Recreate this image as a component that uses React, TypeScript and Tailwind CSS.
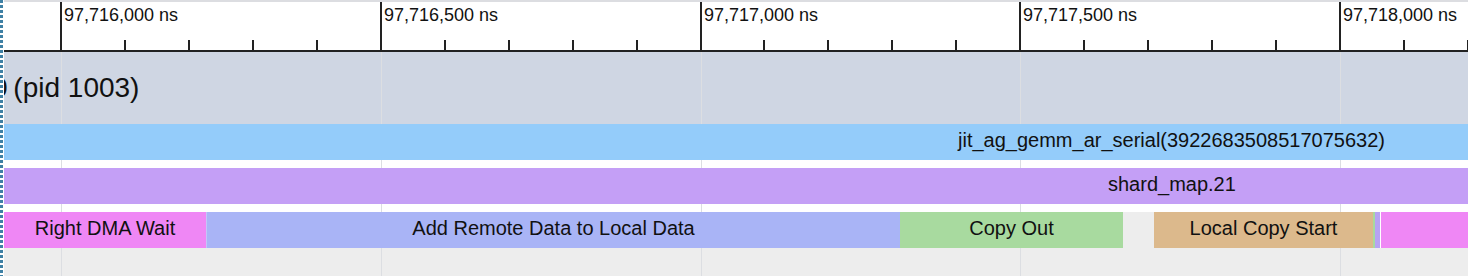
import React from "react";

const MAJOR0 = 56; // main-relative left edge of first major tick (2px wide)
const MAJOR_STEP = 319.75;
const MINOR_STEP = MAJOR_STEP / 5;
const LABELS = [
  "97,716,000 ns",
  "97,716,500 ns",
  "97,717,000 ns",
  "97,717,500 ns",
  "97,718,000 ns",
];

function Ruler() {
  const ticks: { x: number; major: boolean; i: number }[] = [];
  for (let k = 0; k <= 22; k++) {
    ticks.push({ x: MAJOR0 + k * MINOR_STEP, major: k % 5 === 0, i: k });
  }
  return (
    <div className="relative h-[48px] bg-white shrink-0">
      {ticks.map((t) =>
        t.major ? (
          <div
            key={t.i}
            className="absolute top-0 bottom-0 w-[2px] bg-[#222]"
            style={{ left: Math.round(t.x) }}
          />
        ) : (
          <div
            key={t.i}
            className="absolute bottom-0 h-[10px] w-[2px] bg-[#222]"
            style={{ left: Math.round(t.x) }}
          />
        )
      )}
      {LABELS.map((l, i) => (
        <div
          key={l}
          className="absolute top-[3px] text-[18px] leading-[20px] text-[#111] whitespace-nowrap"
          style={{ left: Math.round(MAJOR0 + i * MAJOR_STEP) + 4 }}
        >
          {l}
        </div>
      ))}
    </div>
  );
}

function Bar({
  w,
  color,
  label,
  grow,
  extra,
}: {
  w?: number;
  color: string;
  label?: string;
  grow?: boolean;
  extra?: string;
}) {
  return (
    <div
      className={`relative z-[2] h-[36px] shrink-0 flex justify-center overflow-hidden text-[20px] leading-[32px] text-[#111] whitespace-nowrap ${color} ${
        grow ? "flex-1" : ""
      } ${extra ?? ""}`}
      style={w !== undefined ? { width: w } : undefined}
    >
      {label}
    </div>
  );
}

export default function App() {
  const gridLines = [0, 1, 2, 3, 4].map((i) => Math.round(MAJOR0 + 1 + i * MAJOR_STEP));
  return (
    <div className="w-[1468px] h-[276px] flex overflow-hidden bg-white font-['Liberation_Sans',Arial,sans-serif]">
      <div className="w-[4px] shrink-0 flex">
        <div className="w-[3px] h-full bg-[repeating-linear-gradient(to_bottom,#3e80a4_0px,#3e80a4_3px,#ffffff_3px,#ffffff_5px)]" />
        <div className="w-[1px] h-full bg-white" />
      </div>
      <div className="flex-1 min-w-0 flex flex-col overflow-hidden">
        <div className="h-[2px] bg-[#dcdde1] shrink-0" />
        <Ruler />
        <div className="h-[2px] bg-[#222] shrink-0" />
        <div className="relative flex-1 flex flex-col">
          {gridLines.map((x) => (
            <div
              key={x}
              className="absolute top-0 bottom-0 w-px bg-[#dcdee2] z-[1]"
              style={{ left: x }}
            />
          ))}
          <div className="h-[72px] shrink-0 bg-[#cfd6e3] pt-[20px] overflow-hidden">
            <div className="-ml-[12px] text-[28px] leading-[32px] text-[#111] whitespace-nowrap">
              <span className="-mr-[2px]">0</span> (pid 1003)
            </div>
          </div>
          <div className="relative z-[2] h-[36px] shrink-0 bg-[#94ccfa] text-[20px] leading-[32px] text-[#111] whitespace-nowrap pl-[954px]">
            jit_ag_gemm_ar_serial(3922683508517075632)
          </div>
          <div className="h-[8px] shrink-0" />
          <div className="relative z-[2] h-[36px] shrink-0 bg-[#c49ff6] text-[20px] leading-[32px] text-[#111] whitespace-nowrap pl-[1104px]">
            shard_map.21
          </div>
          <div className="h-[8px] shrink-0" />
          <div className="flex-1 bg-[#ededed] flex items-start">
            <Bar w={202} color="bg-[#ef87f5]" label="Right DMA Wait" />
            <Bar w={694} color="bg-[#a9b4f6]" label="Add Remote Data to Local Data" extra="border-l border-[#c3c6f8]" />
            <Bar w={223} color="bg-[#a8da9f]" label="Copy Out" />
            <div className="w-[31px] shrink-0" />
            <Bar w={219} color="bg-[#dcb98c]" label="Local Copy Start" />
            <Bar w={2} color="bg-[#a8da9f]" />
            <Bar w={5} color="bg-[#b7a3f3]" />
            <Bar w={1} color="bg-white" />
            <Bar grow color="bg-[#ef87f5]" />
          </div>
        </div>
      </div>
    </div>
  );
}
